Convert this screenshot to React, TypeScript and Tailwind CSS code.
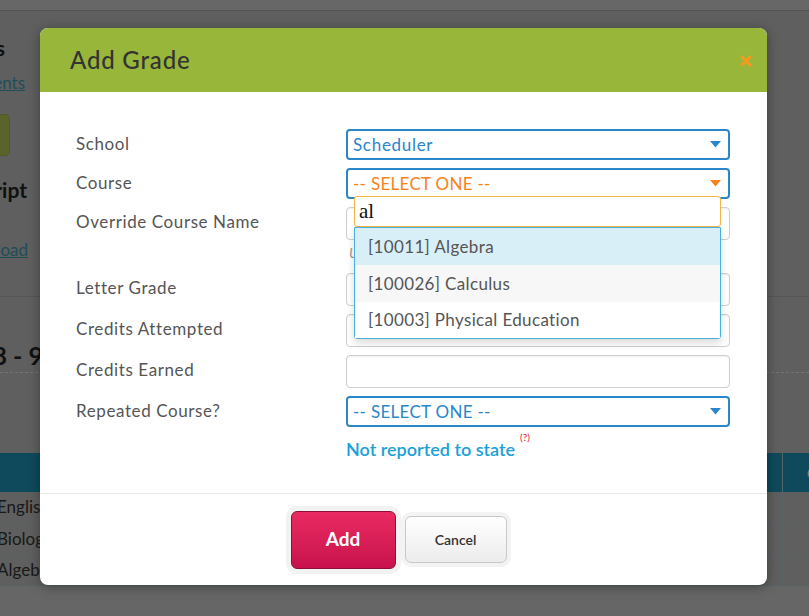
import React from "react";

const font = { fontFamily: "Lato, 'Open Sans', Arial, sans-serif" };

function Caret({ color }: { color: string }) {
  return (
    <svg width="11" height="7" viewBox="0 0 11 7" className="shrink-0">
      <polygon points="0,0 11,0 5.5,6.5" fill={color} />
    </svg>
  );
}

function BlueSelect({ text, textClass, caret }: { text: string; textClass: string; caret: string }) {
  return (
    <div className="h-[31px] w-full rounded-[4px] border-2 border-[#2a86c9] bg-white flex items-center justify-between pl-[5px] pr-[7px]">
      <span className={`text-[17px] leading-none ${textClass}`}>{text}</span>
      <Caret color={caret} />
    </div>
  );
}

function TextBox() {
  return <div className="h-[33px] w-full rounded-[4px] border border-[#cfcfcf] bg-white shadow-[inset_0_1px_2px_rgba(0,0,0,0.06)]" />;
}

function Row({ label, children }: { label: string; children: React.ReactNode }) {
  return (
    <div className="grid grid-cols-[270px_384px]">
      <div className="pt-[4px] text-[17px] leading-[22px] tracking-[0.6px] text-[#555]">{label}</div>
      <div>{children}</div>
    </div>
  );
}

function BackgroundPage() {
  return (
    <div className="min-h-screen w-[809px] overflow-hidden bg-[#bebebe] flex flex-col" style={font}>
      <div className="h-[11px] bg-[#cecece] border-b border-[#a8a8a8]" />
      <div className="-ml-[170px] w-[210px] flex flex-col">
        <div className="mt-[25px] h-[24px] pr-[35px] flex items-center justify-end text-[21px] font-bold text-[#222]">
          Courses
        </div>
        <div className="mt-[13px] h-[20px] pr-[15px] flex items-center justify-end text-[17px] text-[#3e9aae] underline">
          Requirements
        </div>
        <div className="mt-[21px] h-[42px] pr-[30px] flex justify-end">
          <div className="w-[90px] h-full rounded-[5px] bg-[#b4c652] border border-[#a4b444]" />
        </div>
        <div className="mt-[22px] h-[24px] pr-[13px] flex items-center justify-end text-[21px] font-bold text-[#222]">
          Transcript
        </div>
        <div className="mt-[38px] h-[20px] pr-[12px] flex items-center justify-end text-[17px] text-[#3e9aae] underline">
          Download
        </div>
      </div>
      <div className="mt-[36px] h-px bg-[#aaaaaa]" />
      <div className="-ml-[187px] w-[230px] mt-[45px] h-[28px] flex items-center justify-end text-[25px] font-bold text-[#222]">
        Grades 8 - 9
      </div>
      <div className="mt-[2px] border-t border-dashed border-[#e8e8e8]" />
      <div className="mt-[80px] -ml-[3px] w-[815px]">
        <div className="h-[39px] bg-[#1c94b6] grid grid-cols-[785px_30px] text-white text-[16px] font-bold">
          <div />
          <div className="border-l border-[#aacdd6] flex items-center pl-[24px]">C</div>
        </div>
        {["English", "Biology", "Algebra"].map((c, i) => (
          <div
            key={c}
            className={`grid grid-cols-[785px_30px] border-b border-[#b0c4c8] text-[17px] text-[#333] ${i === 1 ? "h-[32px]" : "h-[31px]"}`}
          >
            <div className="flex items-center">{c}</div>
            <div className="border-l border-[#b0c4c8]" />
          </div>
        ))}
      </div>
      <div className="flex-1 bg-[#cccccc]" />
    </div>
  );
}

export default function App() {
  return (
    <div className="relative w-[809px] h-[616px] overflow-hidden">
      <BackgroundPage />
      <div className="absolute inset-0 bg-black/50" />
      <div
        className="absolute left-[40px] top-[28px] w-[727px] rounded-[8px] bg-white shadow-[0_2px_12px_rgba(0,0,0,0.35)]"
        style={font}
      >
        <div className="h-[64px] rounded-t-[8px] bg-[#98b73a] flex items-center justify-between pl-[30px] pr-[15px]">
          <h2 className="text-[24px] leading-none tracking-[0.8px] text-[#333] font-medium">Add Grade</h2>
          <svg width="12" height="12" viewBox="0 0 12 12" className="mt-[2px]">
            <path d="M2 2 L10 10 M10 2 L2 10" stroke="#f39a1f" strokeWidth="3" strokeLinecap="round" />
          </svg>
        </div>

        <div className="pt-[37px] pl-[36px] pb-[34px] flex flex-col gap-[8px]">
          <Row label="School">
            <BlueSelect text="Scheduler" textClass="text-[#2a86c9] tracking-[0.7px]" caret="#2a86c9" />
          </Row>
          <Row label="Course">
            <div className="relative">
              <BlueSelect text="-- SELECT ONE --" textClass="text-[#f7821b] tracking-[0.3px]" caret="#f7821b" />
              <div className="absolute left-[8px] top-[28px] w-[367px] z-10">
                <div className="h-[31px] rounded-[3px] border border-[#f5b547] bg-white flex items-center pl-[4px]">
                  <span className="text-[21px] leading-none text-[#111]" style={{ fontFamily: "'Liberation Serif', 'Times New Roman', serif" }}>
                    al
                  </span>
                </div>
                <ul className="rounded-b-[3px] border border-[#48b0dc] bg-white shadow-[0_4px_8px_rgba(0,0,0,0.15)] text-[17px] tracking-[0.35px] text-[#555]">
                  <li className="h-[37px] bg-[#d9eff7] flex items-center pl-[13px]">[10011] Algebra</li>
                  <li className="h-[37px] bg-[#f7f7f7] flex items-center pl-[13px]">[100026] Calculus</li>
                  <li className="h-[36px] bg-white flex items-center pl-[13px]">[10003] Physical Education</li>
                </ul>
              </div>
            </div>
          </Row>
          <Row label="Override Course Name">
            <TextBox />
            <div className="h-[25px] flex items-center pl-[3px] text-[14px] italic text-[#999]">
              Use this field to override the course name
            </div>
          </Row>
          <Row label="Letter Grade">
            <TextBox />
          </Row>
          <Row label="Credits Attempted">
            <TextBox />
          </Row>
          <Row label="Credits Earned">
            <TextBox />
          </Row>
          <Row label="Repeated Course?">
            <BlueSelect text="-- SELECT ONE --" textClass="text-[#2a86c9] tracking-[0.3px]" caret="#2a86c9" />
            <div className="mt-[12px] h-[20px] flex items-start text-[18px] leading-[20px] font-semibold text-[#1ba0d8]">
              Not reported to state
              <sup className="ml-[5px] -mt-[2px] text-[10px] leading-none font-normal text-[#e0202a]">(?)</sup>
            </div>
          </Row>
        </div>

        <div className="h-[92px] border-t border-[#e6e6e6] flex items-center justify-center gap-[9px] pr-[10px]">
          <button className="w-[105px] h-[58px] rounded-[6px] border border-[#8c1038] bg-gradient-to-b from-[#ea2a62] to-[#c8124d] text-white text-[19px] font-bold shadow-[0_0_0_5px_#f2f2f2]">
            Add
          </button>
          <button className="w-[102px] h-[47px] rounded-[6px] border border-[#c8c8c8] bg-gradient-to-b from-white to-[#ececec] text-[#333] text-[14px] font-semibold shadow-[0_0_0_4px_#f3f3f3]">
            Cancel
          </button>
        </div>
      </div>
    </div>
  );
}
